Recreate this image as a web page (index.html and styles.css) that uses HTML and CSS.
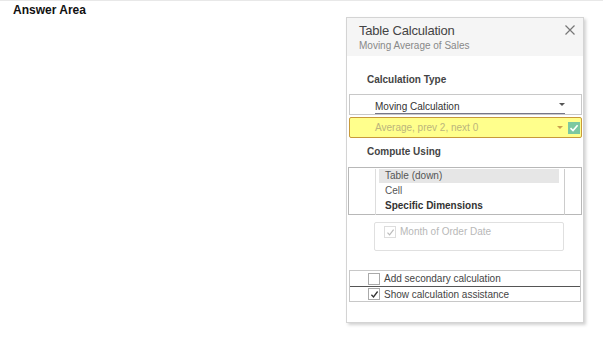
FILE: index.html
```html
<!DOCTYPE html>
<html lang="en">
<head>
  <meta charset="UTF-8" />
  <title>Answer Area</title>
  <link rel="stylesheet" href="styles.css">
</head>
<body>
  <div class="page">
    <h1 class="area-title">Answer Area</h1>

    <!-- Table calculation dialog -->
    <div class="panel">
      <div class="panel-head">
        <div>
          <div class="panel-title">Table Calculation</div>
          <div class="panel-sub">Moving Average of Sales</div>
        </div>
        <svg class="close" width="10" height="10" viewBox="0 0 10 10">
          <path d="M0.5 0.5 L9.5 9.5 M9.5 0.5 L0.5 9.5" stroke="#777" stroke-width="1.2" />
        </svg>
      </div>

      <div class="section-label">Calculation Type</div>
      <div class="select">
        <span class="select-text underline">Moving Calculation</span>
        <span class="caret"></span>
      </div>
      <div class="select highlight">
        <span class="select-text faded">Average, prev 2, next 0</span>
        <span class="caret"></span>
        <span class="ok">
          <svg width="10" height="10" viewBox="0 0 10 10">
            <path d="M1.5 5.2 L4 7.6 L8.6 2.2" stroke="#fff" stroke-width="1.6" fill="none" />
          </svg>
        </span>
      </div>

      <div class="section-label compute">Compute Using</div>
      <div class="list-box">
        <div class="list">
          <div class="list-item selected">Table (down)</div>
          <div class="list-item">Cell</div>
          <div class="list-item bold">Specific Dimensions</div>
        </div>
      </div>

      <div class="dims">
        <span class="check disabled">
          <svg width="9" height="9" viewBox="0 0 9 9">
            <path d="M1.5 4.6 L3.6 6.8 L7.6 1.6" stroke="#bbb" stroke-width="1.2" fill="none" />
          </svg>
        </span>
        <span class="dims-text">Month of Order Date</span>
      </div>

      <div class="options">
        <div class="option">
          <span class="check"></span>
          <span>Add secondary calculation</span>
        </div>
        <div class="option">
          <span class="check">
            <svg width="9" height="9" viewBox="0 0 9 9">
              <path d="M1.4 4.8 L3.5 7 L7.6 1.5" stroke="#333" stroke-width="1.3" fill="none" />
            </svg>
          </span>
          <span>Show calculation assistance</span>
        </div>
      </div>
    </div>
  </div>
</body>
</html>
```

FILE: styles.css
```css
body {
  margin: 0;
  font-family: "Liberation Sans", Arial, sans-serif;
  background: #fff;
  color: #333;
}

.page {
  border-top: 1px solid #e8e8e8;
  height: 344px;
}

.area-title {
  margin: 0;
  padding: 2px 0 0 13px;
  font-size: 12px;
  font-weight: bold;
  color: #111;
  height: 14px;
}

.panel {
  margin: 0 0 0 346px;
  width: 236px;
  height: 304px;
  border: 1px solid #d4d4d4;
  box-shadow: 2px 2px 3px rgba(0, 0, 0, 0.18);
  background: #fff;
}

.panel-head {
  background: #f5f5f5;
  height: 34px;
  padding: 4px 8px 0 12px;
  display: flex;
  justify-content: space-between;
  align-items: flex-start;
}

.panel-title {
  font-size: 13px;
  letter-spacing: -0.2px;
  color: #444;
  line-height: 17px;
}

.panel-sub {
  font-size: 10px;
  color: #888;
  line-height: 13px;
}

.close {
  margin-top: 3px;
}

.section-label {
  font-size: 10px;
  font-weight: bold;
  color: #444;
  margin: 18px 0 0 20px;
  height: 20px;
}

.section-label.compute {
  margin-top: 8px;
  height: 21px;
}

.select {
  margin: 0 1px 0 2px;
  height: 19px;
  border: 1px solid #c8c8c8;
  display: flex;
  align-items: center;
  padding-left: 25px;
  position: relative;
  font-size: 10px;
}

.select + .select {
  margin-top: 2px;
}

.select-text {
  flex: 1;
}

.underline {
  border-bottom: 1px solid #778;
  line-height: 13px;
  margin-top: 5px;
  margin-right: 16px;
}

.underline + .caret {
  position: absolute;
  right: 16px;
  top: 8px;
  margin: 0;
}

.select.highlight {
  background: #ffff8c;
  border-color: #c89a3a;
  border-radius: 2px;
}

.faded {
  color: #bbb57c;
}

.caret {
  width: 0;
  height: 0;
  border-left: 3px solid transparent;
  border-right: 3px solid transparent;
  border-top: 3px solid #555;
  margin-right: 14px;
}

.highlight .caret {
  border-top-color: #c9a050;
  margin-right: 5px;
}

.ok {
  width: 12px;
  height: 12px;
  background: #7cc8a0;
  display: flex;
  align-items: center;
  justify-content: center;
  margin-right: 1px;
}

.list-box {
  margin: 0 1px;
  height: 46px;
  border: 1px solid #b8b8b8;
  padding-left: 26px;
}

.list {
  width: 190px;
  height: 46px;
  border-left: 1px solid #ddd;
  border-right: 1px solid #ccc;
  padding: 0 5px 0 3px;
  box-sizing: border-box;
}

.list-item {
  font-size: 10px;
  height: 14px;
  line-height: 14px;
  color: #555;
  padding-left: 6px;
}

.list-item + .list-item {
  margin-top: 1px;
}

.list-item.selected {
  background: #e6e6e6;
  margin-top: 1px;
}

.list-item.bold {
  font-weight: bold;
  color: #333;
}

.dims {
  margin: 7px 0 0 27px;
  width: 190px;
  height: 29px;
  border: 1px solid #e0e0e0;
  border-radius: 2px;
  box-sizing: border-box;
  display: flex;
  align-items: flex-start;
  padding: 3px 0 0 9px;
  gap: 4px;
  font-size: 10px;
  color: #b8b8b8;
}

.check {
  width: 10px;
  height: 10px;
  border: 1px solid #999;
  display: inline-flex;
  align-items: center;
  justify-content: center;
  background: #fff;
}

.check.disabled {
  border-color: #ddd;
}

.options {
  margin: 19px 2px 0 2px;
  border: 1px solid #c8c8c8;
}

.option {
  height: 15px;
  display: flex;
  align-items: center;
  gap: 4px;
  padding-left: 18px;
  font-size: 10px;
  color: #444;
}

.option + .option {
  height: 14px;
  border-top: 1px solid #555;
}

.option .check {
  border-color: #aaa;
}
```
